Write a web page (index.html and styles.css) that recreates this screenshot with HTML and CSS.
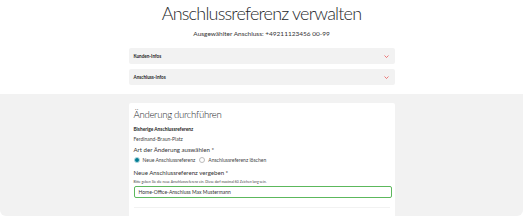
FILE: index.html
```html
<!DOCTYPE html>
<html>
<head>
  <title>Anschlussreferenz verwalten</title>
  <link rel="stylesheet" href="styles.css">
</head>
<body>
  <div class="top">
    <h1 class="page-title">Anschlussreferenz verwalten</h1>
    <p class="subtitle">Ausgewählter Anschluss: +49211123456 00-99</p>
    <div class="accordion">
      <div class="accordion-item">
        <span>Kunden-Infos</span>
        <svg class="chevron" viewBox="0 0 10 6"><path d="M1 1l4 4 4-4" fill="none" stroke="#e60000" stroke-width="1"/></svg>
      </div>
      <div class="accordion-item">
        <span>Anschluss-Infos</span>
        <svg class="chevron" viewBox="0 0 10 6"><path d="M1 1l4 4 4-4" fill="none" stroke="#e60000" stroke-width="1"/></svg>
      </div>
    </div>
  </div>
  <div class="section">
    <div class="card">
      <h2 class="card-title">Änderung durchführen</h2>
      <div class="field-label bold">Bisherige Anschlussreferenz</div>
      <div class="value">Ferdinand-Braun-Platz</div>
      <div class="field-label">Art der Änderung auswählen *</div>
      <div class="radios">
        <label class="radio"><span class="radio-dot checked"></span>Neue Anschlussreferenz</label>
        <label class="radio"><span class="radio-dot"></span>Anschlussreferenz löschen</label>
      </div>
      <div class="field-label spaced">Neue Anschlussreferenz vergeben *</div>
      <div class="hint">Bitte geben Sie die neue Anschlussreferenz ein. Diese darf maximal 60 Zeichen lang sein.</div>
      <div class="input">Home-Office-Anschluss Max Mustermann</div>
      <div class="divider"></div>
    </div>
  </div>
</body>
</html>
```

FILE: styles.css
```css
body {
  margin: 0;
  width: 523px;
  height: 216px;
  overflow: hidden;
  font-family: Lato, 'Open Sans', sans-serif;
  color: #333;
  background: #fff;
}

.top {
  display: flex;
  flex-direction: column;
  align-items: center;
  padding-top: 3px;
  height: 94px;
  box-sizing: border-box;
}

.page-title {
  margin: 0;
  font-size: 18px;
  font-weight: 300;
  letter-spacing: -0.8px;
  line-height: 20px;
  color: #25282b;
}

.subtitle {
  margin: 6px 0 0;
  font-size: 6.5px;
  font-weight: 400;
  line-height: 10px;
  color: #333;
}

.accordion {
  width: 266px;
  margin-top: 9px;
  display: flex;
  flex-direction: column;
  gap: 5px;
}

.accordion-item {
  height: 16px;
  background: #f2f2f2;
  border-radius: 2px;
  display: flex;
  align-items: center;
  justify-content: space-between;
  padding: 0 6px 0 5px;
  font-size: 4.6px;
  font-weight: 700;
  color: #222;
}

.chevron {
  width: 5px;
  height: 3px;
}

.section {
  background: #f2f2f2;
  height: 122px;
  border-radius: 0 0 6px 6px;
  display: flex;
  justify-content: center;
  padding-top: 9px;
  box-sizing: border-box;
}

.card {
  width: 266px;
  background: #fff;
  border-radius: 2px 2px 0 0;
  padding: 4px 5px 0;
  box-sizing: border-box;
}

.card-title {
  margin: 0;
  font-size: 9.6px;
  font-weight: 300;
  letter-spacing: -0.3px;
  line-height: 16px;
  color: #25282b;
}

.field-label {
  font-size: 6.1px;
  line-height: 7px;
  margin-top: 3px;
  color: #333;
}

.field-label.bold {
  font-size: 4.8px;
  font-weight: 700;
  color: #222;
}

.field-label.spaced {
  margin-top: 5px;
}

.value {
  font-size: 5px;
  line-height: 7px;
  margin-top: 3px;
  color: #444;
}

.radios {
  display: flex;
  gap: 4px;
  margin-top: 3px;
}

.radio {
  display: flex;
  align-items: center;
  gap: 3px;
  font-size: 5px;
  line-height: 8px;
  color: #444;
}

.radio-dot {
  width: 6px;
  height: 6px;
  border-radius: 50%;
  border: 0.6px solid #bbb;
  box-sizing: border-box;
}

.radio-dot.checked {
  border: 1px solid #b3dbe3;
  background: #007c92;
}

.hint {
  font-size: 3.45px;
  line-height: 5px;
  margin-top: 4px;
  color: #444;
}

.input {
  margin-top: 1px;
  height: 12px;
  border: 1px solid #5cb85c;
  border-radius: 2px;
  box-sizing: border-box;
  padding: 0 4px;
  display: flex;
  align-items: center;
  font-size: 5px;
  color: #333;
  width: 258px;
}

.divider {
  margin-top: 9px;
  border-top: 1px solid #f2f2f2;
}
```
